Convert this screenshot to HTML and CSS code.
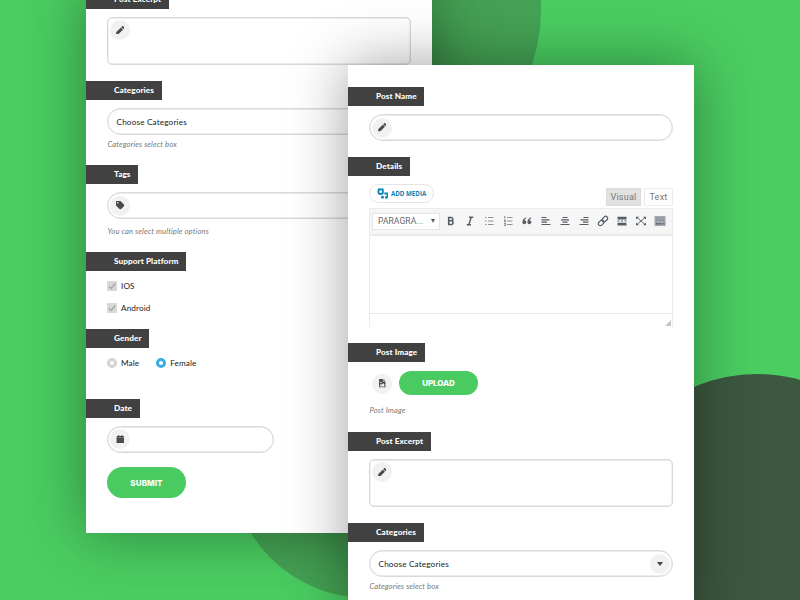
FILE: index.html
```html
<!DOCTYPE html>
<html lang="en">
<head>
<meta charset="utf-8">
<title>Post Form</title>
<link rel="stylesheet" href="styles.css">
</head>
<body>
<svg width="0" height="0" class="defs">
  <symbol id="pencil" viewBox="0 0 512 512"><path d="M497.9 142.1l-46.1 46.1c-4.7 4.7-12.3 4.7-17 0l-111-111c-4.7-4.7-4.7-12.3 0-17l46.1-46.1c18.7-18.7 49.1-18.7 67.9 0l60.1 60.1c18.8 18.7 18.8 49.1 0 67.9zM284.2 99.8L21.6 362.4.4 483.9c-2.9 16.4 11.4 30.6 27.8 27.8l121.5-21.3 262.6-262.6c4.7-4.7 4.7-12.3 0-17l-111-111c-4.8-4.7-12.4-4.7-17.1 0z"/></symbol>
  <symbol id="tag" viewBox="0 0 512 512"><path d="M0 252.118V48C0 21.49 21.49 0 48 0h204.118a48 48 0 0 1 33.941 14.059l211.882 211.882c18.745 18.745 18.745 49.137 0 67.882L293.823 497.941c-18.745 18.745-49.137 18.745-67.882 0L14.059 286.059A48 48 0 0 1 0 252.118zM112 64c-26.51 0-48 21.49-48 48s21.49 48 48 48 48-21.49 48-48-21.49-48-48-48z"/></symbol>
  <symbol id="calendar" viewBox="0 0 448 512"><path d="M12 165h424c6.600 0 12 5.400 12 12v287c0 26.500-21.500 48-48 48H48c-26.500 0-48-21.500-48-48V177c0-6.600 5.400-12 12-12zm436-17v-36c0-26.500-21.500-48-48-48h-48V12c0-6.600-5.400-12-12-12h-40c-6.600 0-12 5.400-12 12v52H160V12c0-6.600-5.400-12-12-12h-40c-6.600 0-12 5.400-12 12v52H48C21.500 64 0 85.500 0 112v36z"/></symbol>
  <symbol id="image" viewBox="0 0 12 16"><path fill-rule="evenodd" d="M1 0h6v4.500h5V15a1 1 0 0 1-1 1H1a1 1 0 0 1-1-1V1a1 1 0 0 1 1-1zM8 0l4 3.500H8zM2 14h8v-4L8 8l-3 3-1.500-1.500L2 11zM3.500 5a1.500 1.500 0 1 0 0 3 1.500 1.500 0 0 0 0-3z"/></symbol>
  <symbol id="check" viewBox="0 0 10 10"><path d="M2 5.200l2.100 2.200L8.300 2.600" fill="none" stroke="#a9a9a9" stroke-width="1.500"/></symbol>
</svg>
<main class="scene">
  <div class="disc disc-top"></div>
  <div class="disc disc-bottom"></div>
  <div class="disc disc-right"></div>

  <section class="panel panel-back">
    <div class="group g91">
      <h2 class="label">Post Excerpt</h2>
      <div class="field area"><span class="badge"><svg><use href="#pencil"/></svg></span></div>
    </div>
    <div class="group g84">
      <h2 class="label">Categories</h2>
      <div class="field pill"><span class="value">Choose Categories</span></div>
      <p class="hint">Categories select box</p>
    </div>
    <div class="group g87">
      <h2 class="label">Tags</h2>
      <div class="field pill"><span class="badge"><svg><use href="#tag"/></svg></span></div>
      <p class="hint hint-low">You can select multiple options</p>
    </div>
    <div class="group g77">
      <h2 class="label">Support Platform</h2>
      <div class="options stack">
        <label class="option"><span class="box"><svg><use href="#check"/></svg></span>IOS</label>
        <label class="option"><span class="box"><svg><use href="#check"/></svg></span>Android</label>
      </div>
    </div>
    <div class="group g70">
      <h2 class="label">Gender</h2>
      <div class="options row">
        <label class="option"><span class="radio"></span>Male</label>
        <label class="option"><span class="radio on"></span>Female</label>
      </div>
    </div>
    <div class="group">
      <h2 class="label">Date</h2>
      <div class="field pill short"><span class="badge"><svg><use href="#calendar"/></svg></span></div>
      <button class="btn submit">SUBMIT</button>
    </div>
  </section>

  <section class="panel panel-front">
    <div class="group g70">
      <h2 class="label">Post Name</h2>
      <div class="field pill"><span class="badge"><svg><use href="#pencil"/></svg></span></div>
    </div>
    <div class="group g186">
      <h2 class="label">Details</h2>
      <div class="editor-head">
        <button class="media">
          <svg viewBox="0 0 12 12"><circle cx="4" cy="4" r="2.500" fill="none" stroke="#0b85b5" stroke-width="2"/><path fill="#0b85b5" d="M1 .3h1.800v1.800H1zM5.200.3H7v1.800H5.200zM8 5h4v5.200a1.600 1.600 0 1 1-1.300-1.600V7H8z"/><circle cx="6" cy="10" r="1.600" fill="#0b85b5"/></svg>
          ADD MEDIA
        </button>
        <div class="tabs"><span class="tab active">Visual</span><span class="tab">Text</span></div>
      </div>
      <div class="editor">
        <div class="toolbar">
          <div class="format"><span>PARAGRA...</span><i class="caret"></i></div>
          <div class="tool"><svg viewBox="0 0 10 10"><path d="M2.700 1.500v7h2.800a1.900 1.900 0 0 0 .2-3.700a1.700 1.700 0 0 0-.4-3.300zM3 4.800h2.700" fill="none" stroke-width="1.600"/></svg></div>
          <div class="tool"><svg viewBox="0 0 10 10"><path d="M4 1.300h4.200M1.800 8.700H6M6.200 1.300L3.800 8.700" fill="none" stroke-width="1.400"/></svg></div>
          <div class="tool light"><svg viewBox="0 0 10 10"><path d="M1 1.500h1.500M1 5h1.500M1 8.500h1.500M4 1.500h5.500M4 5h5.500M4 8.500h5.500"/></svg></div>
          <div class="tool light"><svg viewBox="0 0 10 10"><path d="M1.700 0v2.500M1 4.200h1.300v1.400H1M1 7.500h1.300v2H1M4 1.500h5.500M4 5h5.500M4 8.500h5.500" fill="none"/></svg></div>
          <div class="tool"><svg viewBox="0 0 10 10"><path class="solid" d="M4.300 1.500C1.800 2 .4 3.800.4 6.200a2 2 0 1 0 2.300-2C2.700 3.300 3.300 2.700 4.500 2.300zM9.300 1.500C6.800 2 5.400 3.800 5.400 6.200a2 2 0 1 0 2.300-2c0-.9.6-1.500 1.800-1.900z"/></svg></div>
          <div class="tool"><svg viewBox="0 0 10 10"><path d="M.5 1.500h5M.5 3.800h8M.5 6.100h5.500M.5 8.500h9"/></svg></div>
          <div class="tool"><svg viewBox="0 0 10 10"><path d="M2.500 1.500h5M1 3.800h8M2.500 6.100h5M.5 8.500h9"/></svg></div>
          <div class="tool"><svg viewBox="0 0 10 10"><path d="M4.500 1.500h5M1.500 3.800h8M4 6.100h5.500M.5 8.500h9"/></svg></div>
          <div class="tool"><svg viewBox="0 0 10 10"><g fill="none" transform="rotate(-45 5 5)"><rect x="-.8" y="3" width="6.400" height="4" rx="2"/><rect x="4.400" y="3" width="6.400" height="4" rx="2"/></g></svg></div>
          <div class="tool"><svg viewBox="0 0 10 10"><path class="solid" d="M.5.800h9v2.700h-9zM.5 6.700h9v2.700h-9zM.5 4.600h2v1h-2zM4 4.600h2v1H4zM7.500 4.600h2v1h-2z"/></svg></div>
          <div class="tool"><svg viewBox="0 0 10 10"><path d="M1 1.500l8 7M9 1.500l-8 7" stroke-width=".9"/><path class="solid" d="M0 .8h3L0 3.500zM10 .8H7l3 2.700zM0 9.200h3L0 6.500zM10 9.200H7l3-2.700z"/></svg></div>
          <div class="tool"><svg class="keys" viewBox="0 0 12 10"><rect x=".5" width="11" height="10" fill="#a0a7ae" stroke="none"/><path d="M2 2h8.500M2 4.200h8.500" stroke="#7c858e" stroke-dasharray="1 .8"/><path d="M2 7.700h2.500M5.500 7.700h2M9 7.700h1.500" stroke="#59636e" stroke-width="1.500"/></svg></div>
        </div>
        <div class="canvas"></div>
        <div class="status"><svg viewBox="0 0 6 6"><path d="M6 0v6H0z" fill="#c4c4c4"/></svg></div>
      </div>
    </div>
    <div class="group g89">
      <h2 class="label">Post Image</h2>
      <div class="upload-row"><span class="badge"><svg><use href="#image"/></svg></span><button class="btn upload">UPLOAD</button></div>
      <p class="hint hint-image">Post Image</p>
    </div>
    <div class="group g91">
      <h2 class="label">Post Excerpt</h2>
      <div class="field area"><span class="badge"><svg><use href="#pencil"/></svg></span></div>
    </div>
    <div class="group">
      <h2 class="label">Categories</h2>
      <div class="field pill select"><span class="value">Choose Categories</span><span class="badge arrow"><i class="caret"></i></span></div>
      <p class="hint">Categories select box</p>
    </div>
  </section>
</main>
</body>
</html>
```
FILE: styles.css
```css
* { box-sizing: border-box; }
body { margin: 0; font-family: Lato, "Liberation Sans", sans-serif; }
h2, p { margin: 0; }
button { border: 0; padding: 0; font: inherit; }
.defs { position: absolute; }

.scene { position: relative; width: 800px; height: 600px; overflow: hidden; background: #4acd61; }
.disc { position: absolute; border-radius: 50%; }
.disc-top { left: 197px; top: -162px; width: 344px; height: 344px; background: #45a254; }
.disc-bottom { left: 231px; top: 326px; width: 272px; height: 272px; background: #45a254; }
.disc-right { left: 598px; top: 374px; width: 318px; height: 318px; background: #3c583f; }

.panel { position: absolute; width: 346px; background: #fff; }
.panel-back { left: 86px; top: -10px; height: 543px; box-shadow: 0 0 55px rgba(0, 0, 0, .38); }
.panel-front { left: 348px; top: 65px; height: 560px; padding-top: 22px; box-shadow: 0 0 55px rgba(0, 0, 0, .38); }

.group { display: flex; flex-direction: column; align-items: flex-start; }
.g91 { height: 91px; }
.g84 { height: 84px; }
.g87 { height: 87px; }
.g77 { height: 77px; }
.g70 { height: 70px; }
.g89 { height: 89px; }
.g186 { height: 186px; }

.label { flex: none; height: 18.500px; padding: 0 7.500px 0 28px; background: #414141; color: #fff; font-size: 8.200px; font-weight: 900; line-height: 19px; letter-spacing: .08px; white-space: nowrap; }

.field { display: flex; flex: none; width: 304px; margin-left: 21px; border: 1.500px solid #d9d9d9; box-shadow: inset 0 0 0 .4px #d9d9d9; }
.pill { height: 27px; margin-top: 8.500px; border-radius: 14px; align-items: center; padding: 0 2px; }
.area { height: 48px; margin-top: 8.400px; border-radius: 5px; padding: 2px; }
.short { width: 167px; margin-top: 8px; }
.select { justify-content: space-between; }
.value { padding-left: 6.500px; font-size: 8.200px; color: #222; letter-spacing: .16px; }
.hint { margin: 4px 0 0 21.500px; font-size: 7.600px; line-height: 11px; font-style: italic; color: #777; white-space: nowrap; letter-spacing: .14px; }
.hint-low { margin-top: 6.500px; }
.hint-image { margin-top: 10px; }

.badge { display: flex; flex: none; align-items: center; justify-content: center; width: 20px; height: 20px; border-radius: 50%; background: #f1f1f1; }
.badge svg { width: 8.500px; height: 8.500px; fill: #4a4a4a; }
.caret { display: block; border: 3.500px solid transparent; border-top: 4px solid #444; border-bottom: 0; }

.options { display: flex; margin-left: 21px; font-size: 8.200px; color: #222; letter-spacing: .1px; }
.stack { flex-direction: column; gap: 11.500px; margin-top: 10.500px; }
.row { gap: 17px; margin-top: 10.500px; }
.option { display: flex; align-items: center; gap: 4px; height: 10px; }
.box { width: 10px; height: 10px; background: #d8d8d8; border-radius: 1px; }
.box svg { display: block; width: 10px; height: 10px; }
.radio { width: 10px; height: 10px; border: 3px solid #d4d4d4; border-radius: 50%; }
.radio.on { border-color: #3aaee0; }

.btn { width: 79px; border-radius: 16px; background: #4acb61; color: #fff; font-family: Inter, sans-serif; font-weight: 800; font-size: 8px; }
.submit { height: 31px; margin: 14.500px 0 0 21px; letter-spacing: .1px; }
.upload-row { display: flex; align-items: center; gap: 7px; height: 24px; margin: 9px 0 0 24px; }
.upload-row .badge { margin-top: 2px; }
.upload { height: 24px; letter-spacing: -.1px; }

.editor-head { display: flex; justify-content: space-between; width: 304px; height: 32px; margin-left: 21px; }
.media { display: flex; align-items: center; gap: 3px; width: 65px; height: 19px; margin-top: 8px; padding-left: 7px; border: 1px solid #e4e4e4; border-radius: 10px; background: #fff; color: #0b85b5; font-family: "Open Sans", sans-serif; font-size: 6.200px; font-weight: 700; white-space: nowrap; }
.media svg { flex: none; width: 11px; height: 11px; }
.tabs { display: flex; gap: 3px; margin-top: 12px; }
.tab { height: 18px; width: 29px; border: 1px solid #ececec; color: #777; font: 9px/16px Roboto, sans-serif; letter-spacing: .25px; text-align: center; }
.tab.active { width: 35px; background: #e1e1e1; border-color: #dcdcdc; }
.editor { width: 304px; height: 119px; margin-left: 21px; border: 1px solid #ececec; border-bottom: 0; }
.toolbar { display: flex; align-items: center; height: 26px; padding: 0 2px; background: #f6f6f6; border-bottom: 1px solid #e6e6e6; box-shadow: 0 1px 1px #eee; }
.format { display: flex; flex: none; align-items: center; justify-content: space-between; width: 68px; height: 17px; margin-right: 1px; padding: 0 4px 0 5px; background: #fff; border: 1px solid #e5e5e5; font: 8.500px Roboto, sans-serif; color: #666; letter-spacing: .1px; }
.format .caret { border-width: 4.500px 2.500px 0; border-top-color: #555d66; }
.tool { display: flex; flex: none; justify-content: center; width: 19px; }
.tool svg { width: 10px; height: 10px; overflow: visible; stroke: #555d66; stroke-width: 1.200; }
.tool .keys { width: 12px; }
.tool .solid { fill: #555d66; stroke: none; }
.light svg { opacity: .65; }
.canvas { height: 79px; border-bottom: 1px solid #e9e9e9; }
.status { display: flex; justify-content: flex-end; align-items: flex-end; height: 12px; padding-right: 1px; }
.status svg { width: 6px; height: 6px; }
```
